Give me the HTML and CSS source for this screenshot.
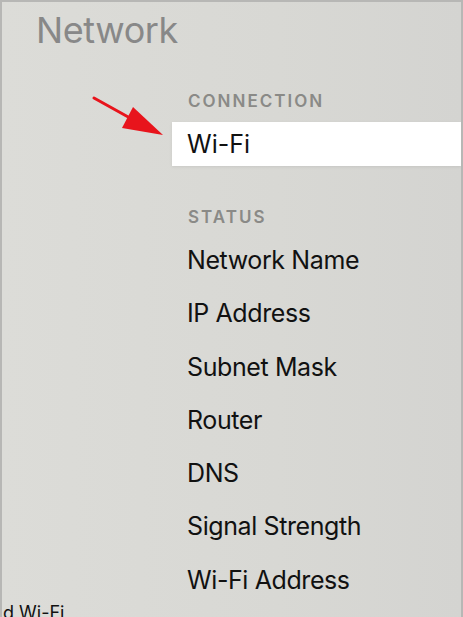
FILE: index.html
```html
<!DOCTYPE html>
<html>
<head>
    <meta charset="UTF-8">
    <title>Network</title>
    <link rel="stylesheet" href="styles.css">
</head>
<body>
    <div class="screen">
        <div class="side">
            <h1 class="title">Network</h1>
            <div class="side-item">d Wi-Fi</div>
        </div>
        <div class="main">
            <div class="label label-first">CONNECTION</div>
            <div class="focus">Wi-Fi</div>
            <div class="label label-status">STATUS</div>
            <ul class="rows">
                <li>Network Name</li>
                <li>IP Address</li>
                <li>Subnet Mask</li>
                <li>Router</li>
                <li>DNS</li>
                <li>Signal Strength</li>
                <li>Wi-Fi Address</li>
            </ul>
        </div>
        <svg class="arrow" width="463" height="617" viewBox="0 0 463 617">
            <line x1="94" y1="98" x2="130" y2="118" stroke="#e8141c" stroke-width="3" stroke-linecap="round"/>
            <polygon points="122,128 133,107 163,135" fill="#e8141c"/>
        </svg>
    </div>
</body>
</html>
```

FILE: styles.css
```css
:root {
    --bg: #d9d9d5;
    --border: #b7b7b5;
    --muted: #8a8a87;
    --ink: #111;
}
body {
    margin: 0;
    font-family: Inter, "Noto Sans", sans-serif;
}
.screen {
    position: relative;
    height: 617px;
    box-sizing: border-box;
    border: 2px solid var(--border);
    border-bottom: none;
    background: linear-gradient(90deg, #dcdcd8, #d8d8d4 60%, #d4d4d1);
    overflow: hidden;
    display: grid;
    grid-template-columns: 170px 1fr;
}
.side {
    display: flex;
    flex-direction: column;
}
.title {
    margin: 0;
    padding-left: 34px;
    padding-top: 8px;
    font-size: 36px;
    font-weight: 400;
    line-height: 40px;
    color: #888;
    letter-spacing: -0.4px;
}
.side-item {
    margin-top: auto;
    margin-bottom: -6px;
    padding-left: 1px;
    font-size: 18px;
    line-height: 20px;
    color: var(--ink);
}
.main {
    display: flex;
    flex-direction: column;
}
.label {
    font-size: 17px;
    font-weight: 600;
    line-height: 20px;
    color: var(--muted);
    padding-left: 16px;
    letter-spacing: 2px;
}
.label-first {
    margin-top: 89px;
}
.focus {
    margin-top: 11px;
    height: 44px;
    line-height: 44px;
    background: #fff;
    padding-left: 15px;
    font-size: 25px;
    color: var(--ink);
    box-shadow: 0 1px 3px rgba(0, 0, 0, 0.08);
}
.label-status {
    margin-top: 41px;
}
.rows {
    list-style: none;
    margin: 7px 0 0;
    padding: 0 0 0 15px;
}
.rows li {
    height: 53.3px;
    line-height: 53px;
    font-size: 25px;
    color: var(--ink);
    letter-spacing: -0.4px;
}
.arrow {
    position: absolute;
    left: -2px;
    top: -2px;
    pointer-events: none;
}
```
